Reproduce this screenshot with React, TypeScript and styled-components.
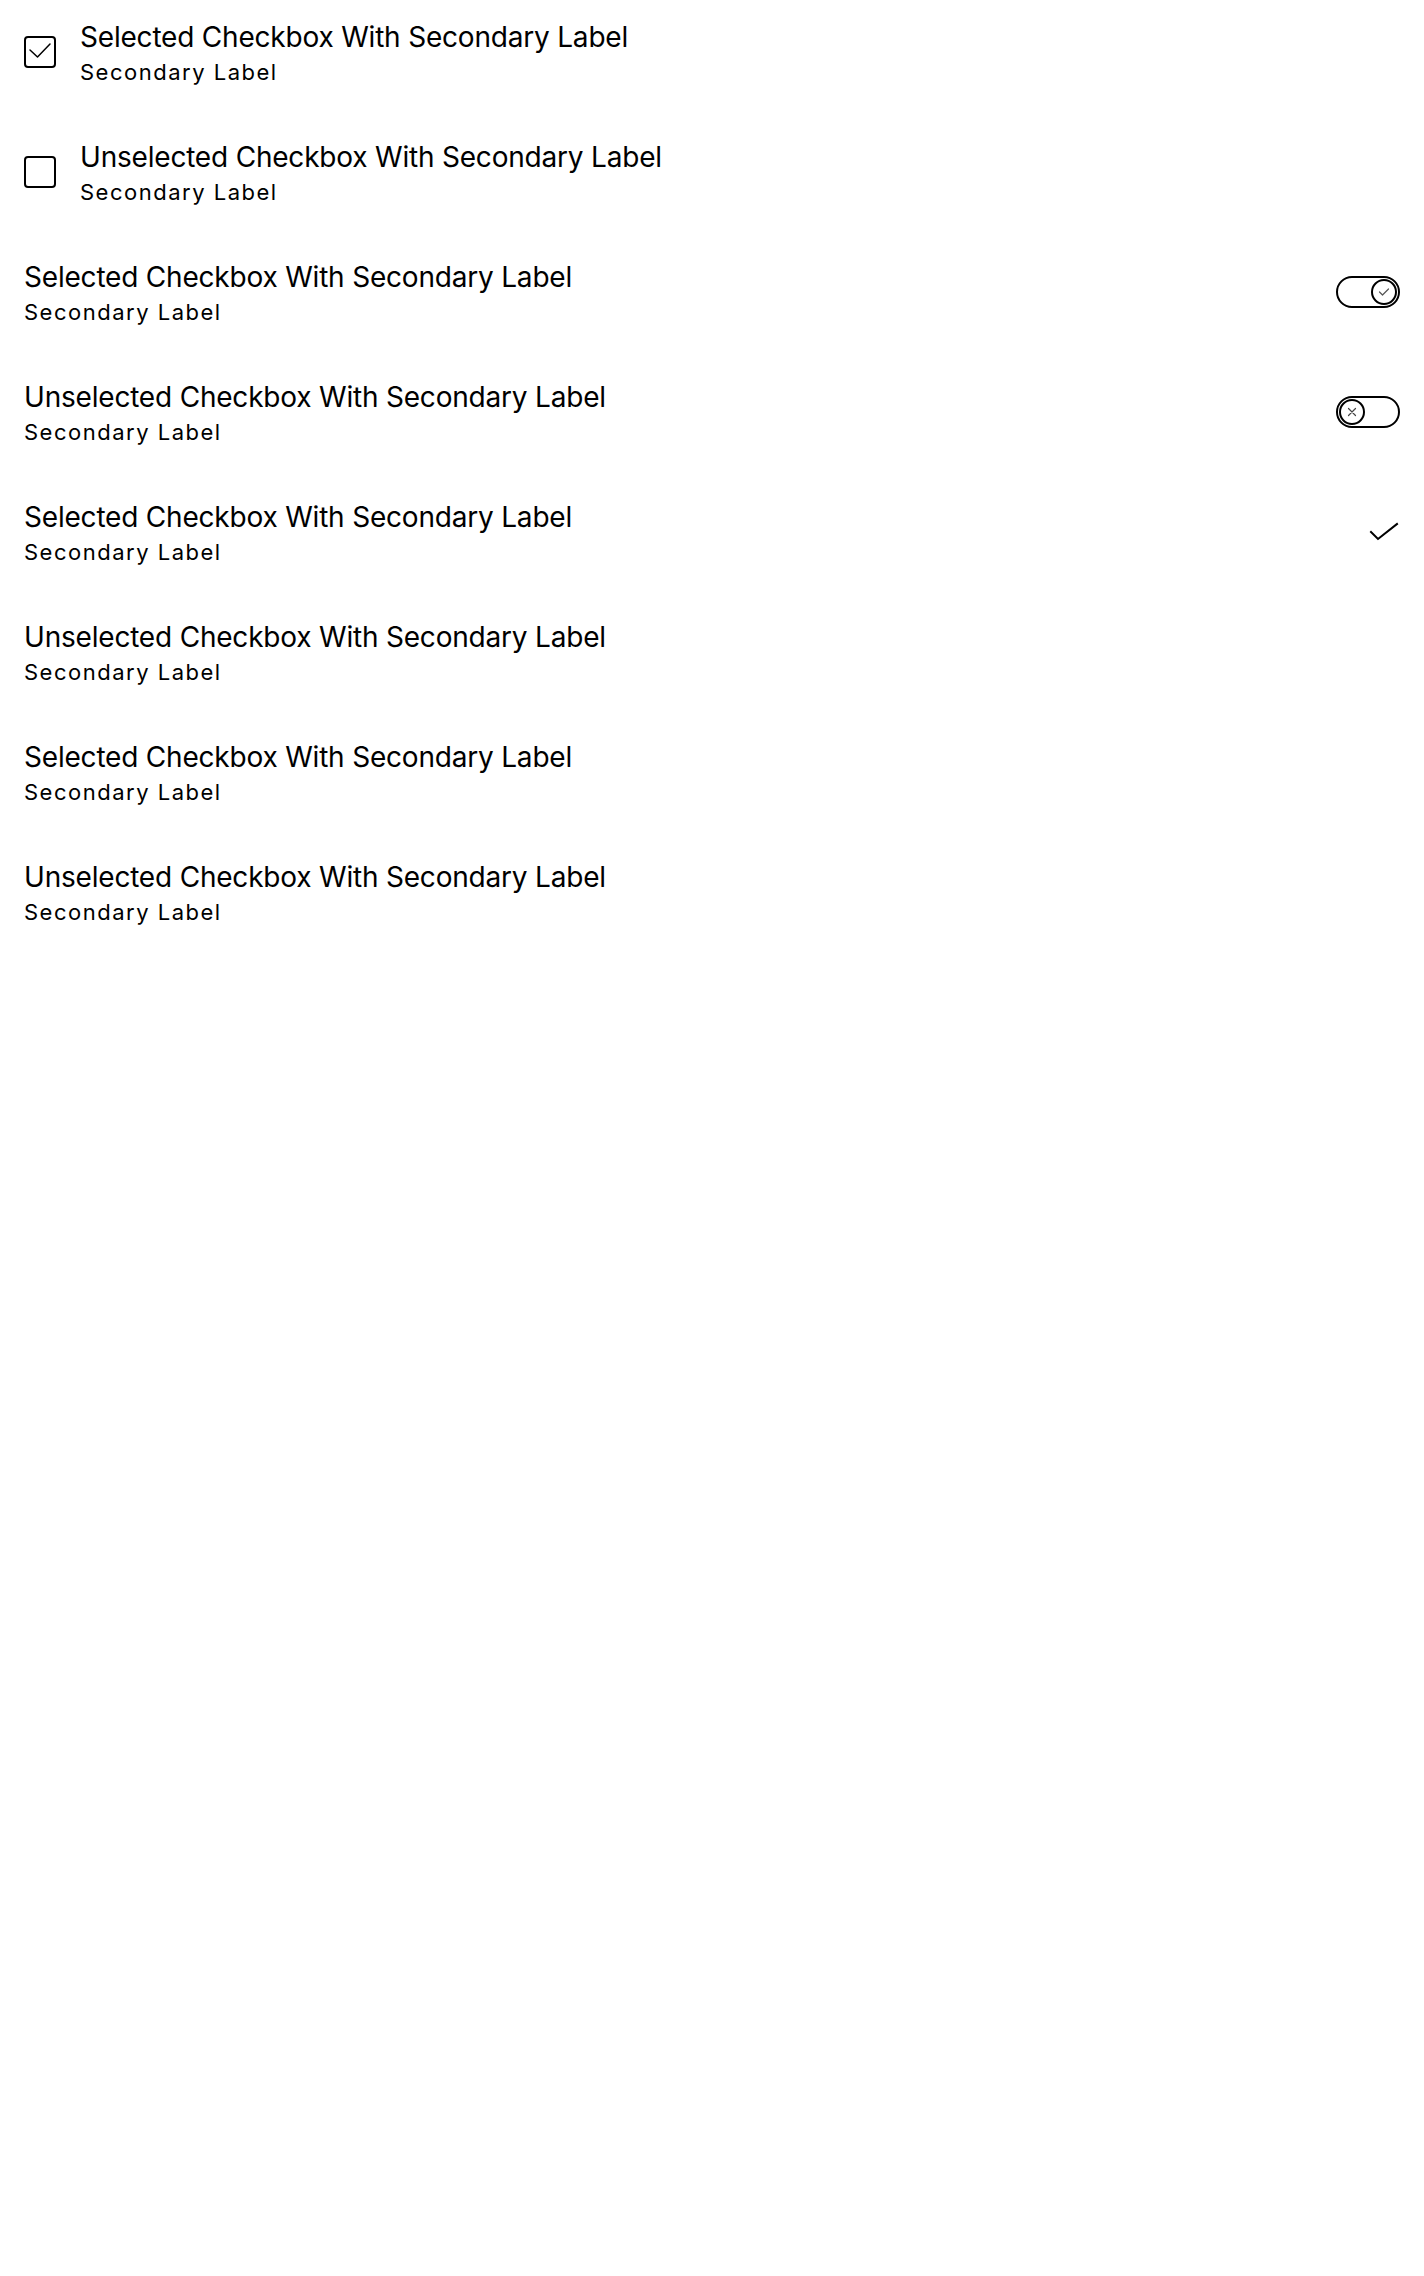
import { createGlobalStyle } from "styled-components";
import styled from "styled-components";

const GlobalStyle = createGlobalStyle`
  html, body {
    margin: 0;
    padding: 0;
    background: #ffffff;
  }
  body {
    font-family: Inter, "Noto Sans", "Liberation Sans", sans-serif;
    color: #000000;
  }
`;

const List = styled.div`
  display: flex;
  flex-direction: column;
  gap: 16px;
  padding: 0 24px;
`;

const Row = styled.label`
  display: flex;
  align-items: center;
  gap: 24px;
  min-height: 104px;
  cursor: pointer;
`;

const Labels = styled.div`
  display: flex;
  flex-direction: column;
  flex: 1;
  min-width: 0;
`;

const Primary = styled.div`
  font-size: 28px;
  line-height: 36px;
  font-weight: 400;
  letter-spacing: -0.2px;
`;

const Secondary = styled.div`
  font-size: 22px;
  line-height: 28px;
  margin-top: 3px;
  letter-spacing: 1.5px;
`;

const Box = styled.span<{ $checked: boolean }>`
  flex: none;
  width: 32px;
  height: 32px;
  box-sizing: border-box;
  border: 2px solid #000;
  border-radius: 4px;
  display: flex;
  align-items: center;
  justify-content: center;
  & svg {
    display: ${(p) => (p.$checked ? "block" : "none")};
  }
`;

const Track = styled.span<{ $on: boolean }>`
  flex: none;
  width: 64px;
  height: 32px;
  box-sizing: border-box;
  border: 2px solid #000;
  border-radius: 16px;
  padding: 1px 1px;
  display: flex;
  align-items: center;
  justify-content: ${(p) => (p.$on ? "flex-end" : "flex-start")};
`;

const Knob = styled.span`
  width: 26px;
  height: 26px;
  box-sizing: border-box;
  border: 2px solid #000;
  border-radius: 50%;
  display: flex;
  align-items: center;
  justify-content: center;
`;

const Tick = styled.span`
  flex: none;
  width: 32px;
  height: 32px;
  display: flex;
  align-items: center;
  justify-content: center;
`;

const Checkbox = ({ checked }: { checked: boolean }) => (
  <Box $checked={checked}>
    <svg width="28" height="28" viewBox="0 0 28 28" fill="none">
      <path
        d="M4 12 L11.5 19 L24 6"
        stroke="#000"
        strokeWidth="1.5"
        strokeLinecap="round"
        strokeLinejoin="round"
      />
    </svg>
  </Box>
);

const Toggle = ({ on }: { on: boolean }) => (
  <Track $on={on}>
    <Knob>
      {on ? (
        <svg width="14" height="14" viewBox="0 0 14 14" fill="none">
          <path d="M2.5 7 L5.5 10 L11.5 4" stroke="#555" strokeWidth="1.2" strokeLinecap="round" strokeLinejoin="round" />
        </svg>
      ) : (
        <svg width="14" height="14" viewBox="0 0 14 14" fill="none">
          <path d="M3.5 3.5 L10.5 10.5 M10.5 3.5 L3.5 10.5" stroke="#444" strokeWidth="1.2" strokeLinecap="round" />
        </svg>
      )}
    </Knob>
  </Track>
);

const CheckMark = ({ on }: { on: boolean }) => (
  <Tick>
    {on && (
      <svg width="32" height="32" viewBox="0 0 32 32" fill="none">
        <path d="M3 16 L10 23 L29 8" stroke="#000" strokeWidth="2" strokeLinecap="square" />
      </svg>
    )}
  </Tick>
);

type Kind = "checkbox" | "switch" | "check" | "plain";

const rows: { kind: Kind; on: boolean }[] = [
  { kind: "checkbox", on: true },
  { kind: "checkbox", on: false },
  { kind: "switch", on: true },
  { kind: "switch", on: false },
  { kind: "check", on: true },
  { kind: "check", on: false },
  { kind: "plain", on: true },
  { kind: "plain", on: false },
];

const App = () => {
  return (
    <>
      <GlobalStyle />
      <List>
        {rows.map((row, i) => (
          <Row key={i}>
            {row.kind === "checkbox" && <Checkbox checked={row.on} />}
            <Labels>
              <Primary>
                {row.on ? "Selected" : "Unselected"} Checkbox With Secondary Label
              </Primary>
              <Secondary>Secondary Label</Secondary>
            </Labels>
            {row.kind === "switch" && <Toggle on={row.on} />}
            {row.kind === "check" && <CheckMark on={row.on} />}
          </Row>
        ))}
      </List>
    </>
  );
};

export default App;
